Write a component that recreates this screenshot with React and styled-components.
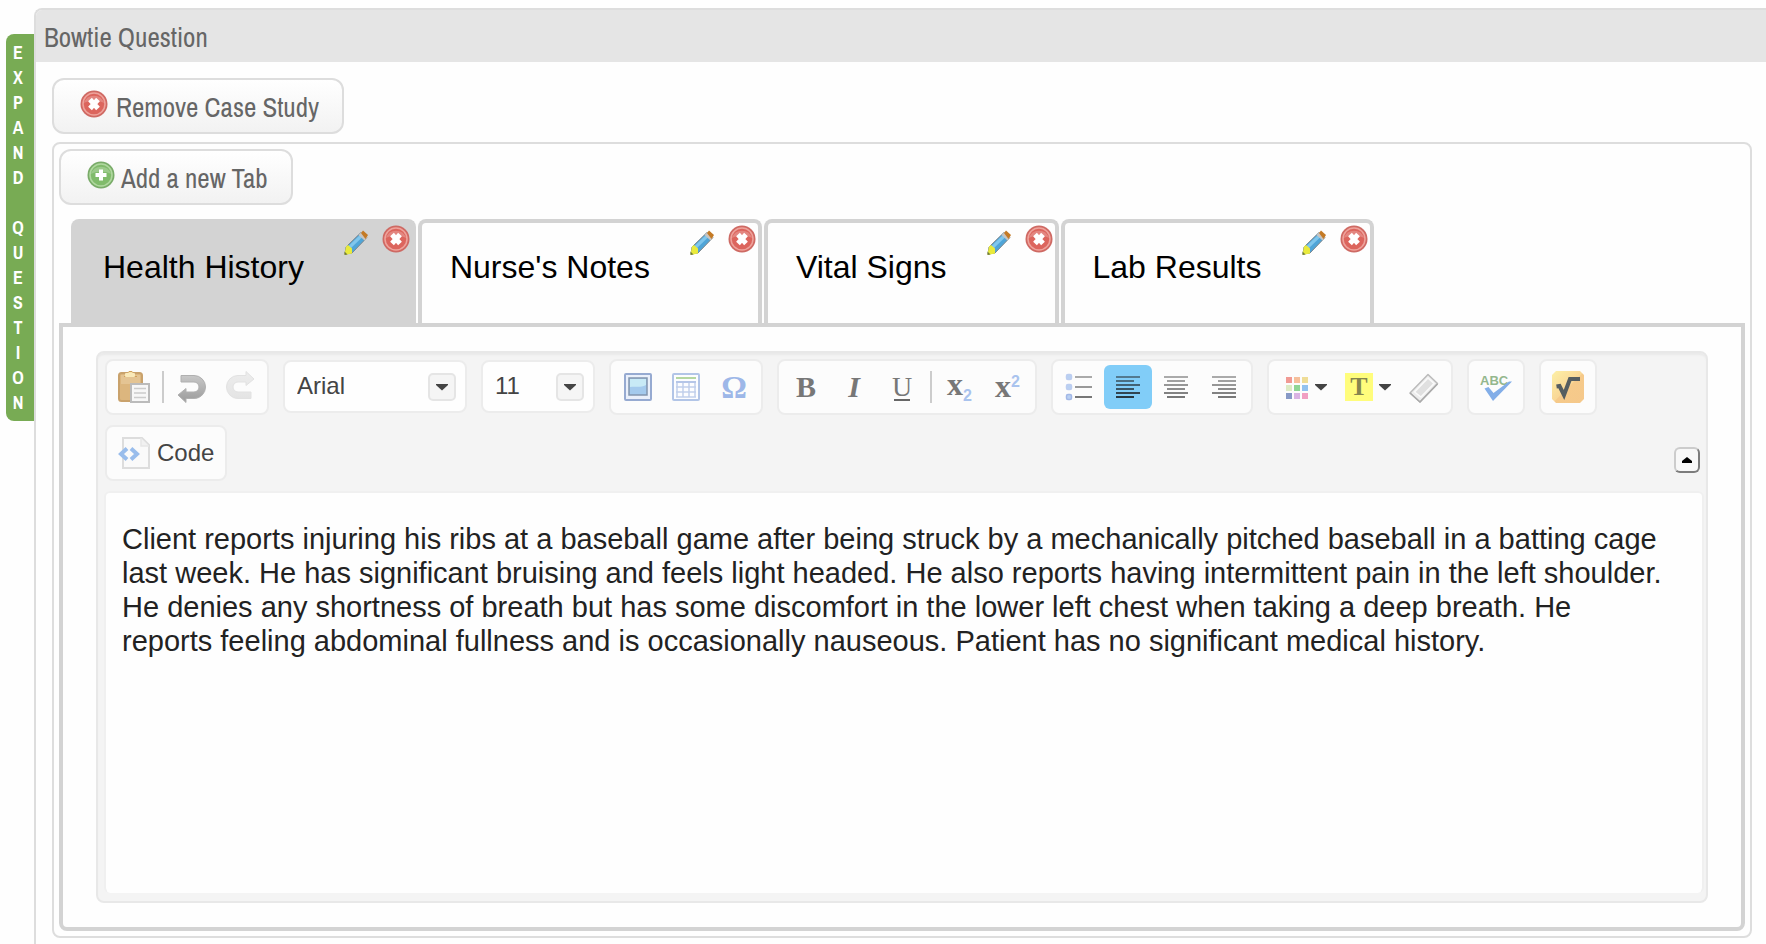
import React, { useState } from "react";
import styled, { createGlobalStyle, css } from "styled-components";

const TABS = ["Health History", "Nurse's Notes", "Vital Signs", "Lab Results"];

const HISTORY_TEXT =
  "Client reports injuring his ribs at a baseball game after being struck by a mechanically pitched baseball in a batting cage last week. He has significant bruising and feels light headed. He also reports having intermittent pain in the left shoulder. He denies any shortness of breath but has some discomfort in the lower left chest when taking a deep breath. He reports feeling abdominal fullness and is occasionally nauseous. Patient has no significant medical history.";

const SWATCHES = [
  "#f19a94", "#f6bf9b", "#efdd97",
  "#ddebc4", "#8fd595", "#93c2ef",
  "#8799c6", "#d9b3e3", "#f19fc3",
];

const GlobalStyle = createGlobalStyle`
  * {
    box-sizing: border-box;
  }

  body {
    margin: 0;
    background: #fefefe;
    font-family: "Liberation Sans", Arial, sans-serif;
  }

  button, select, textarea {
    font-family: inherit;
  }

  svg {
    display: block;
    flex: none;
    overflow: visible;
  }
`;

const narrowFont = css`
  font-family: "Liberation Sans Narrow", "Archivo Narrow", "Arial Narrow", sans-serif;
`;

const Page = styled.div`
  display: flex;
  align-items: flex-start;
  min-height: 100vh;
  padding: 8px 0 0 6px;
`;

const ExpandButton = styled.button`
  ${narrowFont}
  flex: none;
  width: 28px;
  margin: 26px 0 0;
  padding: 6px 0;
  border: 0;
  border-radius: 8px 0 0 8px;
  background: #78ab54;
  color: white;
  font-size: 18px;
  font-weight: bold;
  line-height: 25px;
  text-align: center;
  cursor: pointer;
`;

const Letter = styled.span`
  display: block;
  height: 25px;
  padding-right: 4px;
`;

const Question = styled.section`
  flex: 1;
  min-width: 0;
  min-height: calc(100vh - 8px);
  border: 2px solid #ddd;
  border-right: 0;
  border-bottom: 0;
  border-top-left-radius: 8px;
`;

const Title = styled.h1`
  ${narrowFont}
  margin: 0;
  padding: 2px 8px 0;
  border-top-left-radius: 6px;
  background: #e5e5e5;
  color: #666;
  font-size: 27px;
  font-weight: normal;
  line-height: 50px;
`;

const Content = styled.div`
  padding: 16px 14px 0 16px;
`;

const ActionButton = styled.button`
  ${narrowFont}
  display: flex;
  align-items: center;
  gap: ${(props) => props.$gap}px;
  height: 56px;
  padding: 2px 23px 0 26px;
  border: 2px solid #ddd;
  border-radius: 12px;
  background: linear-gradient(#fff, #f2f2f2);
  color: #666;
  font-size: 27px;
  line-height: 30px;
  cursor: pointer;

  svg {
    margin-bottom: 6px;
  }
`;

const CaseStudy = styled.div`
  margin-top: 8px;
  padding: 5px;
  border: 2px solid #ddd;
  border-radius: 8px;
`;

const TabList = styled.div`
  display: flex;
  gap: 2px;
  margin-top: 14px;
  padding-left: 12px;
`;

const Tab = styled.div`
  display: flex;
  align-items: flex-start;
  height: 104px;
  padding: 2px 2px 0 0;
  border: 4px solid #d3d3d3;
  border-bottom: 0;
  border-radius: 8px 8px 0 0;
  background: ${(props) => (props.$active ? "#d3d3d3" : "transparent")};
`;

const TabLabel = styled.button`
  margin: 0;
  padding: 22px 40px 0 28px;
  border: 0;
  background: none;
  color: black;
  font-size: 32px;
  line-height: 40px;
  white-space: nowrap;
  cursor: pointer;
`;

const IconButton = styled.button`
  margin: 0 14px 0 0;
  padding: 0;
  border: 0;
  background: none;
  cursor: pointer;

  &:last-child {
    margin-right: 0;
  }
`;

const TabPanel = styled.div`
  padding: 24px 33px;
  border: 4px solid #d3d3d3;
  border-radius: 0 0 8px 8px;
`;

const Editor = styled.div`
  padding: 6px 2px 8px 6px;
  border: 2px solid #e8e8e8;
  border-radius: 8px;
  background: #f4f4f4;
  box-shadow: inset 0 3px 2px -1px #e9e9e9;
`;

const Toolbar = styled.div`
  position: relative;
  display: flex;
  flex-wrap: wrap;
  align-items: flex-start;
  gap: 10px 14px;
  padding: 0 0 10px 1px;
`;

const Group = styled.div`
  display: flex;
  align-items: center;
  height: 56px;
  padding: 0 3px;
  border: 2px solid #ececec;
  border-radius: 8px;
  background: #fcfcfc;
`;

const Tool = styled.button`
  display: flex;
  align-items: center;
  justify-content: center;
  gap: 7px;
  min-width: 48px;
  height: 44px;
  margin: 0;
  padding: 0 8px;
  border: 0;
  border-radius: 6px;
  background: ${(props) => (props.$active ? "#81cdf8" : "transparent")};
  color: #444;
  font-size: 24px;
  line-height: 28px;
  cursor: pointer;
`;

const MenuTool = styled(Tool)`
  gap: 6px;
  min-width: 64px;
`;

const Separator = styled.div`
  width: 2px;
  height: 32px;
  margin: 0 4px;
  background: #ccc;
`;

const SelectBox = styled.div`
  position: relative;
  width: ${(props) => props.$width}px;
  margin-top: 1px;
`;

const Select = styled.select`
  appearance: none;
  width: 100%;
  height: 53px;
  padding: 0 40px 2px 12px;
  border: 2px solid #ececec;
  border-radius: 8px;
  background: #fefefe;
  color: #444;
  font-size: 24px;
`;

const SelectArrow = styled.span`
  position: absolute;
  top: 13px;
  right: 11px;
  display: grid;
  place-items: center;
  width: 28px;
  height: 28px;
  border: 2px solid #e5e5e5;
  border-radius: 5px;
  background: #f5f5f5;
  pointer-events: none;
`;

const CollapseButton = styled.button`
  position: absolute;
  right: 4px;
  bottom: 18px;
  display: grid;
  place-items: center;
  width: 26px;
  height: 26px;
  padding: 0;
  border: 2px solid;
  border-color: #ccc #7c7c7c #7c7c7c #ccc;
  border-radius: 6px;
  background: #f8f8f8;
  cursor: pointer;
`;

const TextArea = styled.textarea`
  display: block;
  width: 100%;
  height: 402px;
  padding: 29px 35px 29px 16px;
  border: 2px solid #f0f0f0;
  border-bottom: 0;
  border-radius: 6px;
  outline: 0;
  background: #fefefe;
  color: #222;
  font-size: 29px;
  line-height: 34px;
  resize: none;
`;

function RoundIcon({ red }) {
  const edge = red ? "#cd6a64" : "#79aa69";
  const ring = red ? "#eda39c" : "#b0d7a0";
  const fill = red ? "#dc655d" : "#80bb6b";
  const cross = red
    ? "M10 9.500l8 9M18 9.500l-8 9"
    : "M14 8.500v11M8.500 14h11";

  return (
    <svg width="28" height="28" viewBox="0 0 28 28">
      <circle cx="14" cy="14" r="13.500" fill={edge} />
      <circle cx="14" cy="14" r="12" fill={fill} />
      <circle cx="14" cy="14" r="11" fill="none" stroke={ring} strokeWidth="1.500" />
      <path d="M4 13a10.500 10.500 0 0 1 20 0c-5-3-15-3-20 0z" fill="#fff" opacity=".22" />
      <path d={cross} stroke="#fff" strokeWidth={red ? 5 : 4} fill="none" />
    </svg>
  );
}

function PencilIcon() {
  return (
    <svg width="24" height="32" viewBox="0 -2 24 32">
      <path d="M1 27l1-7L17 5.500l6 5L8 26z" fill="#4fa5d8" stroke="#7d868c" strokeWidth="1" />
      <path d="M4 19.500L17 7l2.500 2L6 22z" fill="#80c6ec" />
      <path d="M14.500 8l3-3 6 5.500-3 3z" fill="#c8c4c0" />
      <path d="M17 6l2-2.500 5 4.500-2.500 4z" fill="#c47a25" />
      <path d="M.5 28l1.500-8.500 2-1.500 4 3.500v5z" fill="#e9ea3c" />
      <path d="M.5 28v-3.500l3 3z" fill="#6e7a3c" />
    </svg>
  );
}

function PasteIcon() {
  return (
    <svg width="32" height="32" viewBox="0 0 32 32">
      <rect x="1" y="2" width="23" height="28" rx="2.500" fill="#dcb67e" stroke="#c9a26c" strokeWidth="2" />
      <rect x="3" y="4" width="19" height="9" fill="#e7cb9c" opacity=".7" />
      <path d="M6 5.500h3V2.500L11 .5h3l2 2v3h3" fill="#f6e3ae" stroke="#cfa05a" />
      <rect x="7" y="2" width="10" height="4" rx="1" fill="#f9e9b9" />
      <rect x="13" y="13" width="18" height="18" fill="#f7f7f7" stroke="#bbb" strokeWidth="2" />
      <path d="M16 17.500h12M16 22h12M16 26.500h12" stroke="#ccc" strokeWidth="1.500" />
    </svg>
  );
}

function UndoIcon({ redo }) {
  const id = redo ? "redoFill" : "undoFill";

  return (
    <svg width="32" height="32" viewBox="0 0 32 32">
      <defs>
        <linearGradient id={id} x1="0" y1="0" x2="0" y2="1">
          <stop offset="0" stopColor={redo ? "#e4e4e4" : "#c8c8c8"} />
          <stop offset="1" stopColor={redo ? "#ededed" : "#9a9a9a"} />
        </linearGradient>
      </defs>
      <g transform={redo ? "rotate(180 16 16)" : undefined}>
        <path
          d="M5 4.500h13a11.500 11.500 0 0 1 0 23h-8v4L2 24l8-6.500v3.500h8a5 5 0 0 0 0-10H5z"
          fill={`url(#${id})`}
          stroke={redo ? "#e2e2e2" : "#b0b0b0"}
        />
      </g>
    </svg>
  );
}

function ArrowIcon({ up, color = "#444" }) {
  return (
    <svg width="12" height="8" viewBox="0 0 12 8">
      <path d={up ? "M1 7h10v-2L6 1 1 5z" : "M0 1h12v1L6 7.500 0 2z"} fill={color} />
    </svg>
  );
}

function ImageIcon() {
  return (
    <svg width="28" height="28" viewBox="0 0 28 28">
      <rect x="1" y="1" width="26" height="26" rx="1" fill="#eaf0fb" stroke="#96aad1" strokeWidth="2" />
      <rect x="5" y="5" width="18" height="17" fill="#a4caed" stroke="#8395ae" strokeWidth="1.500" />
      <path d="M6 6h16v6c-6 3-10 1-16 2z" fill="#c8eaf6" />
    </svg>
  );
}

function TableIcon() {
  return (
    <svg width="28" height="28" viewBox="0 0 28 28">
      <rect x="1" y="1" width="26" height="26" rx="1" fill="#fcfdff" stroke="#b2c5e7" strokeWidth="2" />
      <path d="M4 5h20" stroke="#b5d7a2" strokeWidth="2" />
      <path d="M4 14h20M4 19h20M4 24h20M5 8v16M11 8v16M17 8v16M23 8v16" stroke="#c1d0ec" strokeWidth="1.500" />
      <path d="M4 9h20" stroke="#b5c6e8" strokeWidth="2" />
    </svg>
  );
}

function GlyphIcon({ glyph, size = 30, color = "#777", bold, italic, underline, y = 26 }) {
  return (
    <svg width="32" height="32" viewBox="0 0 32 32">
      <text
        x="16"
        y={y}
        textAnchor="middle"
        fontFamily="Liberation Serif, serif"
        fontSize={size}
        fontWeight={bold ? "bold" : "normal"}
        fontStyle={italic ? "italic" : "normal"}
        fill={color}
      >
        {glyph}
      </text>
      {underline && <path d="M8 29h16" stroke="#666" strokeWidth="2" />}
    </svg>
  );
}

function ScriptIcon({ raised }) {
  return (
    <svg width="32" height="32" viewBox="0 0 32 32">
      <text x="3" y={raised ? 26 : 24} fontFamily="Liberation Serif, serif" fontSize="32" fontWeight="bold" fill="#777">
        x
      </text>
      <text x="19" y={raised ? 16 : 30} fontFamily="Liberation Sans, sans-serif" fontSize="16" fontWeight="bold" fill="#a9c3ee">
        2
      </text>
    </svg>
  );
}

function ListIcon() {
  return (
    <svg width="32" height="32" viewBox="0 0 32 32">
      {[6, 16, 26].map((y, i) => (
        <g key={y}>
          <rect x="2.500" y={y - 2.500} width="5" height="5" rx="1.500" fill="#b9d0f2" stroke={i === 2 ? "#a3b8e6" : "#bdcdf0"} strokeWidth="1.500" />
          <path d={`M11 ${y}h17`} stroke={["#aaa", "#999", "#777"][i]} strokeWidth="2" />
        </g>
      ))}
    </svg>
  );
}

function AlignIcon({ align, active }) {
  const shades = active
    ? ["#52798f", "#4a6e82", "#426173", "#3a5362", "#314552", "#293740"]
    : ["#aaa", "#a0a0a0", "#969696", "#8c8c8c", "#828282", "#787878"];

  return (
    <svg width="32" height="32" viewBox="0 0 32 32">
      {shades.map((shade, i) => {
        const width = i % 2 ? 18 : 24;
        const start = { left: 4, center: 16 - width / 2, right: 28 - width }[align];
        return <rect key={shade} x={start} y={5 + i * 4} width={width} height="2" fill={shade} />;
      })}
    </svg>
  );
}

function PaletteIcon() {
  return (
    <svg width="28" height="24" viewBox="0 0 28 24">
      {SWATCHES.map((color, i) => (
        <rect key={color} x={5 + (i % 3) * 8} y={2 + Math.floor(i / 3) * 8} width="6" height="6" fill={color} />
      ))}
    </svg>
  );
}

function HighlightIcon() {
  return (
    <svg width="28" height="28" viewBox="0 0 28 28">
      <rect width="28" height="28" fill="#fffd7c" />
      <text x="14" y="22" textAnchor="middle" fontFamily="Liberation Serif, serif" fontSize="26" fontWeight="bold" fill="#85854f">
        T
      </text>
    </svg>
  );
}

function EraserIcon() {
  return (
    <svg width="32" height="32" viewBox="0 0 32 32">
      <path d="M2 22L20 3.500l9.500 9L12 31z" fill="#ededed" stroke="#bbb" strokeWidth="1.500" strokeLinejoin="round" />
      <path d="M6.500 21L20 7l6 5.500L13 26z" fill="#e0e0e0" stroke="#fafafa" strokeWidth="1.500" />
      <path d="M2 22l10 9 17.500-18" fill="none" stroke="#aaa" strokeWidth="1.500" />
    </svg>
  );
}

function SpellIcon() {
  return (
    <svg width="32" height="32" viewBox="0 0 32 32">
      <text x="0" y="14" fontFamily="Liberation Sans, sans-serif" fontSize="13" fontWeight="bold" fill="#94b78d">
        ABC
      </text>
      <path d="M4.500 17.500l4-1.500 5 6L29 10.500h3L13 30z" fill="#83aee8" />
    </svg>
  );
}

function FormulaIcon() {
  return (
    <svg width="32" height="32" viewBox="0 0 32 32">
      <defs>
        <linearGradient id="formulaFill" x1="0" y1="0" x2="1" y2="1">
          <stop offset="0" stopColor="#fdf0a6" />
          <stop offset=".5" stopColor="#f9d796" />
          <stop offset=".52" stopColor="#f6ca8a" />
          <stop offset="1" stopColor="#f5c88b" />
        </linearGradient>
      </defs>
      <path d="M4 0h24l4 4v24l-4 4H4l-4-4V4z" fill="url(#formulaFill)" />
      <path d="M4.500 15.500l3-.5 4.500 9L18 8h10" fill="none" stroke="#555d60" strokeWidth="4" />
    </svg>
  );
}

function CodeIcon() {
  return (
    <svg width="32" height="32" viewBox="0 0 32 32">
      <path d="M5 1h19l7 7v23H5z" fill="#fafafa" stroke="#ddd" strokeWidth="2" />
      <path d="M23 1v8h8" fill="#f1f1f1" stroke="#e6e6e6" strokeWidth="1.500" />
      <path d="M9 11.500L3 17l6 5.500M13 11.500l6 5.500-6 5.500" fill="none" stroke="#99bdec" strokeWidth="4" />
    </svg>
  );
}

function ExpandQuestion() {
  return (
    <ExpandButton aria-label="EXPAND QUESTION">
      {"EXPAND QUESTION".split("").map((letter, i) => (
        <Letter key={i}>{letter}</Letter>
      ))}
    </ExpandButton>
  );
}

function Dropdown({ label, width, options }) {
  return (
    <SelectBox $width={width}>
      <Select aria-label={label}>
        {options.map((option) => (
          <option key={option}>{option}</option>
        ))}
      </Select>
      <SelectArrow>
        <ArrowIcon />
      </SelectArrow>
    </SelectBox>
  );
}

function EditorToolbar() {
  const [align, setAlign] = useState("left");

  return (
    <Toolbar>
      <Group>
        <Tool aria-label="Paste"><PasteIcon /></Tool>
        <Separator />
        <Tool aria-label="Undo"><UndoIcon /></Tool>
        <Tool aria-label="Redo"><UndoIcon redo /></Tool>
      </Group>
      <Dropdown label="Font" width={184} options={["Arial", "Georgia", "Verdana"]} />
      <Dropdown label="Size" width={114} options={["11", "12", "14"]} />
      <Group>
        <Tool aria-label="Image"><ImageIcon /></Tool>
        <Tool aria-label="Table"><TableIcon /></Tool>
        <Tool aria-label="Symbol"><GlyphIcon glyph="Ω" size={32} color="#9db7e8" bold y={27} /></Tool>
      </Group>
      <Group>
        <Tool aria-label="Bold"><GlyphIcon glyph="B" bold /></Tool>
        <Tool aria-label="Italic"><GlyphIcon glyph="I" bold italic /></Tool>
        <Tool aria-label="Underline"><GlyphIcon glyph="U" size={28} underline y={25} /></Tool>
        <Separator />
        <Tool aria-label="Subscript"><ScriptIcon /></Tool>
        <Tool aria-label="Superscript"><ScriptIcon raised /></Tool>
      </Group>
      <Group>
        <Tool aria-label="List"><ListIcon /></Tool>
        {["left", "center", "right"].map((side) => (
          <Tool key={side} aria-label={"Align " + side} $active={align === side} onClick={() => setAlign(side)}>
            <AlignIcon align={side} active={align === side} />
          </Tool>
        ))}
      </Group>
      <Group>
        <MenuTool aria-label="Colors"><PaletteIcon /><ArrowIcon /></MenuTool>
        <MenuTool aria-label="Highlight"><HighlightIcon /><ArrowIcon /></MenuTool>
        <Tool aria-label="Clear formatting"><EraserIcon /></Tool>
      </Group>
      <Group>
        <Tool aria-label="Spelling"><SpellIcon /></Tool>
      </Group>
      <Group>
        <Tool aria-label="Formula"><FormulaIcon /></Tool>
      </Group>
      <Group>
        <Tool><CodeIcon />Code</Tool>
      </Group>
      <CollapseButton aria-label="Collapse toolbar">
        <ArrowIcon up color="#000" />
      </CollapseButton>
    </Toolbar>
  );
}

function App() {
  const [activeTab, setActiveTab] = useState(TABS[0]);

  return (
    <>
      <GlobalStyle />
      <Page>
        <ExpandQuestion />
        <Question>
          <Title>Bowtie Question</Title>
          <Content>
            <ActionButton $gap={8}>
              <RoundIcon red />
              Remove Case Study
            </ActionButton>
            <CaseStudy>
              <ActionButton $gap={6}>
                <RoundIcon />
                Add a new Tab
              </ActionButton>
              <TabList>
                {TABS.map((tab) => (
                  <Tab key={tab} $active={tab === activeTab}>
                    <TabLabel onClick={() => setActiveTab(tab)}>{tab}</TabLabel>
                    <IconButton aria-label={"Edit " + tab}><PencilIcon /></IconButton>
                    <IconButton aria-label={"Remove " + tab}><RoundIcon red /></IconButton>
                  </Tab>
                ))}
              </TabList>
              <TabPanel>
                <Editor>
                  <EditorToolbar />
                  <TextArea aria-label={activeTab} defaultValue={HISTORY_TEXT} spellCheck={false} />
                </Editor>
              </TabPanel>
            </CaseStudy>
          </Content>
        </Question>
      </Page>
    </>
  );
}

export default App;
